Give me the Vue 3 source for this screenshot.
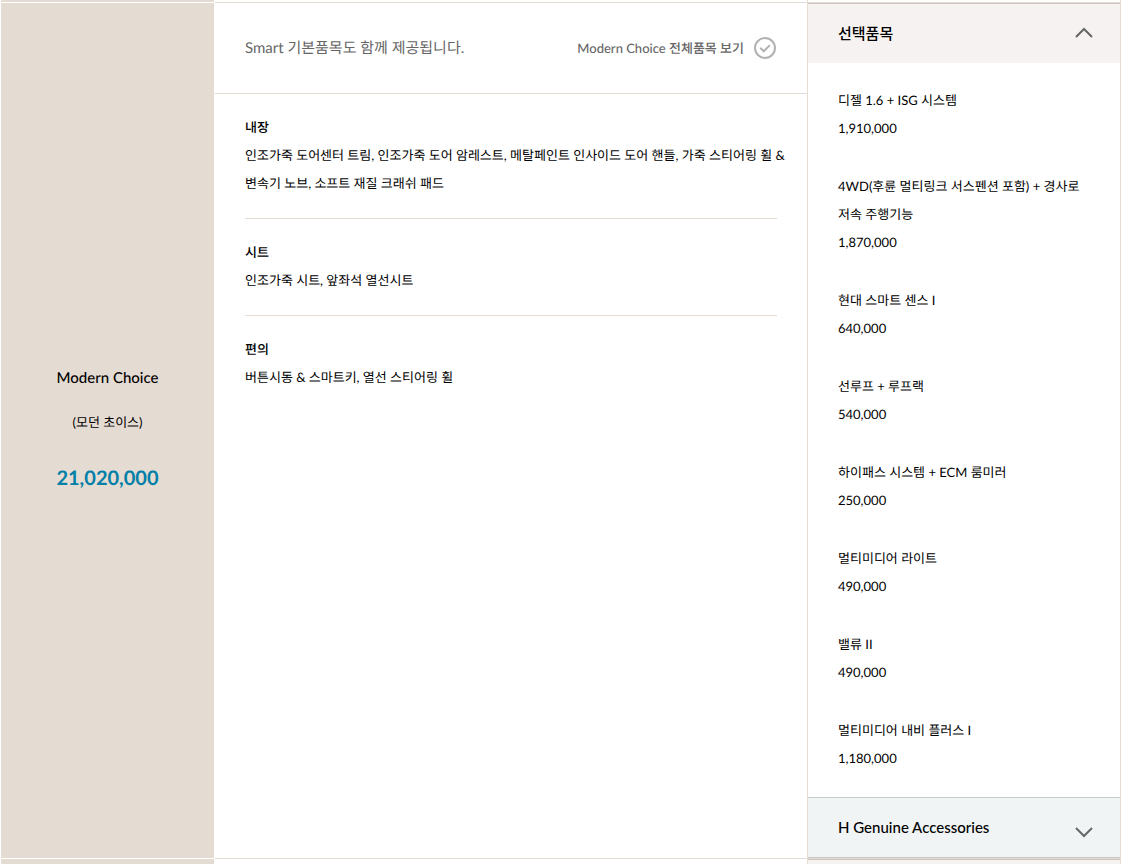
<script setup>
import { ref } from 'vue'

const optionsOpen = ref(true)
const accessoriesOpen = ref(false)

const features = [
  {
    title: '내장',
    lines: [
      '인조가죽 도어센터 트림, 인조가죽 도어 암레스트, 메탈페인트 인사이드 도어 핸들, 가죽 스티어링 휠 &',
      '변속기 노브, 소프트 재질 크래쉬 패드',
    ],
  },
  { title: '시트', lines: ['인조가죽 시트, 앞좌석 열선시트'] },
  { title: '편의', lines: ['버튼시동 & 스마트키, 열선 스티어링 휠'] },
]

const options = [
  { name: '디젤 1.6 + ISG 시스템', price: '1,910,000' },
  { name: '4WD(후륜 멀티링크 서스펜션 포함) + 경사로 저속 주행기능', price: '1,870,000' },
  { name: '현대 스마트 센스 I', price: '640,000' },
  { name: '선루프 + 루프랙', price: '540,000' },
  { name: '하이패스 시스템 + ECM 룸미러', price: '250,000' },
  { name: '멀티미디어 라이트', price: '490,000' },
  { name: '밸류 II', price: '490,000' },
  { name: '멀티미디어 내비 플러스 I', price: '1,180,000' },
]
</script>

<template>
  <main class="trims">
    <div class="row row-prev">
      <div class="model"></div>
      <div class="details"></div>
      <div class="extras"></div>
    </div>

    <section class="row row-current">
      <header class="model">
        <h2>Modern Choice</h2>
        <p class="local-name">(모던 초이스)</p>
        <strong>21,020,000</strong>
      </header>

      <div class="details">
        <div class="intro">
          <p>Smart 기본품목도 함께 제공됩니다.</p>
          <a href="#all">
            Modern Choice 전체품목 보기
            <svg width="24" height="24" viewBox="0 0 24 24" aria-hidden="true">
              <circle cx="12" cy="12" r="10" />
              <path d="M7.3 11.8l3.5 3.5 6-6.2" />
            </svg>
          </a>
        </div>
        <div class="features">
          <section v-for="f in features" :key="f.title" class="feature">
            <h3>{{ f.title }}</h3>
            <p v-for="line in f.lines" :key="line">{{ line }}</p>
          </section>
        </div>
      </div>

      <div class="extras">
        <button class="toggle toggle-options" type="button" :aria-expanded="optionsOpen" @click="optionsOpen = !optionsOpen">
          선택품목
          <svg width="18" height="12" viewBox="0 0 18 12" aria-hidden="true">
            <path d="M1 10l8-8 8 8" />
          </svg>
        </button>
        <ul v-if="optionsOpen" class="options">
          <li v-for="o in options" :key="o.name">
            <p>{{ o.name }}</p>
            <p>{{ o.price }}</p>
          </li>
        </ul>
        <button class="toggle toggle-accessories" type="button" :aria-expanded="accessoriesOpen" @click="accessoriesOpen = !accessoriesOpen">
          H Genuine Accessories
          <svg width="18" height="12" viewBox="0 0 18 12" aria-hidden="true">
            <path d="M1 2l8 8 8-8" />
          </svg>
        </button>
      </div>
    </section>

    <div class="row row-next">
      <div class="model"></div>
      <div class="details"></div>
      <div class="extras"></div>
    </div>
  </main>
</template>

<style>
body {
  margin: 0;
  background: #fff;
}
</style>

<style scoped>
.trims {
  min-height: 100vh;
  box-sizing: border-box;
  display: flex;
  flex-direction: column;
  padding-left: 1px;
  overflow: hidden;
  font-family: Lato, "Noto Sans CJK KR", sans-serif;
  font-size: 13px;
  line-height: 28px;
  text-rendering: geometricPrecision;
  color: #000;
}

h2, h3, p, ul {
  margin: 0;
  padding: 0;
}

.row {
  display: grid;
  grid-template-columns: 213px minmax(0, 1fr) 314px;
}

.model {
  border-top: 1px solid #fff;
  background: #e4dbd2;
  text-align: center;
}

.details {
  margin-left: 1px;
  border-top: 1px solid #e4dbd2;
}

.extras {
  border: solid #e4dbd2;
  border-width: 1px 1px 0;
}

.row-prev {
  height: 2px;
}

.row-prev .model,
.row-prev .details,
.row-prev .extras {
  border-top: 0;
}

.row-next {
  flex: 1;
  min-height: 6px;
}

.row-next .extras {
  background: #f6f2f1;
  box-shadow: inset 0 1px #c9c4c1;
}

.row-current .model {
  display: flex;
  flex-direction: column;
  justify-content: center;
  align-items: center;
  gap: 16px;
  padding-bottom: 6px;
}

.model h2 {
  font-size: 15px;
  font-weight: 500;
}

.model strong {
  margin-top: 12px;
  font-size: 20px;
  font-weight: 700;
  color: #007fa8;
}

.intro {
  display: flex;
  justify-content: space-between;
  align-items: center;
  height: 90px;
  padding: 0 30px;
  border-bottom: 1px solid #e4dbd2;
  color: #666;
}

.intro p {
  font-size: 15px;
}

.intro a {
  display: flex;
  align-items: center;
  gap: 9px;
  font-weight: 500;
  color: #666;
  text-decoration: none;
}

.intro svg {
  fill: none;
  stroke: #b2b2b2;
  stroke-width: 2;
}

.features {
  padding: 0 30px;
}

.feature {
  padding: 19px 0 21px;
  white-space: nowrap;
}

.feature + .feature {
  border-top: 1px solid #e4dbd2;
}

.feature h3 {
  font-size: 13px;
  font-weight: 500;
}

.toggle {
  display: flex;
  justify-content: space-between;
  align-items: center;
  width: 100%;
  height: 60px;
  padding: 0 27px 2px 30px;
  border: 0;
  border-top: 1px solid #c9c4c1;
  font: inherit;
  font-size: 15px;
  font-weight: 500;
  color: #000;
  cursor: pointer;
}

.toggle svg {
  fill: none;
  stroke: #666;
  stroke-width: 2;
}

.toggle-options {
  background: #f6f2f1;
}

.toggle-accessories {
  height: 61px;
  border-top-color: #c8cccd;
  border-bottom: 1px solid #c9c4c1;
  background: #f0f4f5;
}

.toggle-accessories svg {
  margin-top: 10px;
}

.options {
  padding: 23px 30px 25px;
  list-style: none;
}

.options li + li {
  margin-top: 30px;
}
</style>
